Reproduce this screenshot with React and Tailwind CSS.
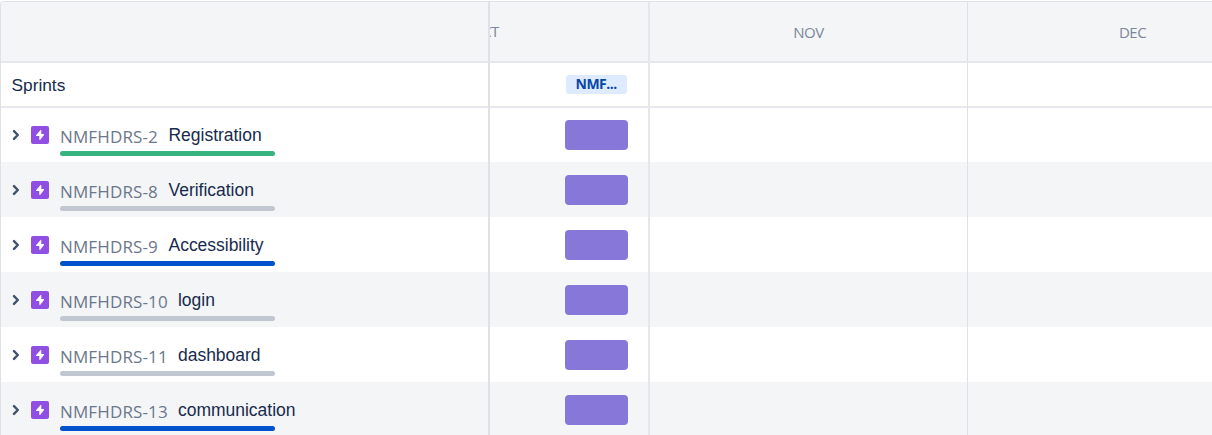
const EPICS = [
  { key: 'NMFHDRS-2', name: 'Registration', bar: 'bg-[#36b37e]', gap: 'w-[108.5px]' },
  { key: 'NMFHDRS-8', name: 'Verification', bar: 'bg-[#c1c7d0]', gap: 'w-[108.5px]' },
  { key: 'NMFHDRS-9', name: 'Accessibility', bar: 'bg-[#0052cc]', gap: 'w-[108.5px]' },
  { key: 'NMFHDRS-10', name: 'login', bar: 'bg-[#c1c7d0]', gap: 'w-[118px]' },
  { key: 'NMFHDRS-11', name: 'dashboard', bar: 'bg-[#c1c7d0]', gap: 'w-[118px]' },
  { key: 'NMFHDRS-13', name: 'communication', bar: 'bg-[#0052cc]', gap: 'w-[118px]' },
];

const SANS = "font-['Open_Sans','Noto_Sans',sans-serif]";

function Chevron() {
  return (
    <svg className="h-3 w-2 shrink-0" viewBox="0 0 8 12" fill="none" stroke="#42526e" strokeWidth="2.4" strokeLinecap="round" strokeLinejoin="round">
      <path d="M3 2.1 6.8 6 3 9.9" />
    </svg>
  );
}

function EpicIcon() {
  return (
    <svg className="ml-[12px] h-[18px] w-[18px] shrink-0" viewBox="0 0 18 18">
      <rect width="18" height="18" rx="2" fill="#904ee2" />
      <path d="M9.6 3.9 5 9.3Q4.8 10 5.5 10H8.3V13.6Q8.5 14.3 9.1 13.9L13 8.9Q13.2 8.2 12.5 8.1H10.3V4.3Q10.1 3.6 9.6 3.9Z" fill="#fff" />
    </svg>
  );
}

function EpicRow({ epic, shaded }) {
  return (
    <div className={`flex h-[55px] shrink-0 pl-[10px] ${shaded ? 'bg-[#f4f5f7]' : ''}`}>
      <div className="flex h-[56px] items-center">
        <Chevron />
        <EpicIcon />
      </div>
      <div className="ml-[11px] flex h-full flex-col pt-[16px]">
        <div className="flex h-6 items-center whitespace-nowrap">
          <span className={`${epic.gap} ${SANS} mt-[3px] text-[17px] leading-6 font-normal tracking-[0.13px] text-[#6b778c]`}>{epic.key}</span>
          <span className="text-[17.5px] leading-6 tracking-[-0.02px] text-[#172b4d]">{epic.name}</span>
        </div>
        <div className={`mt-[4px] h-[5px] w-[215px] rounded-full ${epic.bar}`} />
      </div>
    </div>
  );
}

function MonthCells({ height, border = '', tone = '', labels = ['', '', ''], children }) {
  return (
    <div className={`flex shrink-0 ${height} ${tone}`}>
      <div className={`w-[160px] shrink-0 border-r-2 border-r-[#e5e7eb] ${border}`}>
        {labels[0]}
        {children}
      </div>
      <div className={`flex w-[318px] shrink-0 items-center justify-center border-r border-r-[#dfe1e6] ${border}`}>{labels[1]}</div>
      <div className={`flex w-[329px] shrink-0 items-center justify-center ${border}`}>{labels[2]}</div>
    </div>
  );
}

function MonthLabel({ children }) {
  return <span className={`${SANS} text-[15px] leading-5 font-normal tracking-[-0.5px] text-[#7a869a]`}>{children}</span>;
}

export default function App() {
  return (
    <div className="flex h-[435px] w-[1212px] overflow-hidden bg-white pt-px font-['Liberation_Sans',Arial,sans-serif]">
      <div className="flex h-[434px] w-full overflow-hidden rounded-tl-[4px] border-t border-l border-[#dfe1e6]">
        <section className="flex w-[489px] shrink-0 flex-col border-r-2 border-[#dfe1e6]">
          <div className="h-[61px] shrink-0 border-b-2 border-[#e5e7eb] bg-[#f4f5f7]" />
          <div className="flex h-[45px] shrink-0 items-center border-b-2 border-[#e7e9ee] pt-0.5 pl-[10.5px] text-[17.3px] text-[#172b4d]">Sprints</div>
          <div className="-mt-px flex shrink-0 flex-col">
            {EPICS.map((epic, i) => (
              <EpicRow key={epic.key} epic={epic} shaded={i % 2 === 1} />
            ))}
          </div>
        </section>
        <section className="flex min-w-0 grow flex-col overflow-hidden">
          <MonthCells
            height="h-[61px]"
            tone="bg-[#f4f5f7]"
            border="border-b-2 border-b-[#e5e7eb]"
            labels={[
              <div key="oct" className="flex h-full items-center overflow-hidden">
                <span className="-ml-[19px]"><MonthLabel>OCT</MonthLabel></span>
              </div>,
              <MonthLabel key="nov">NOV</MonthLabel>,
              <MonthLabel key="dec">DEC</MonthLabel>,
            ]}
          />
          <MonthCells height="h-[45px]" border="border-b-2 border-b-[#e7e9ee]">
            <div className={`mt-[12px] ml-[76px] h-[19px] w-[61px] rounded-[3px] bg-[#deebff] pl-[9.5px] ${SANS} text-[14px] leading-[18px] font-bold tracking-[-0.5px] text-[#0747a6]`}>
              NMF...
            </div>
          </MonthCells>
          <div className="-mt-px flex shrink-0 flex-col">
            {EPICS.map((epic, i) => (
              <MonthCells key={epic.key} height="h-[55px]" tone={i % 2 === 1 ? 'bg-[#f4f5f7]' : ''}>
                <div className="mt-[13px] ml-[74.5px] h-[30px] w-[63.5px] rounded-[4px] bg-[#8777d9]" />
              </MonthCells>
            ))}
          </div>
        </section>
      </div>
    </div>
  );
}
